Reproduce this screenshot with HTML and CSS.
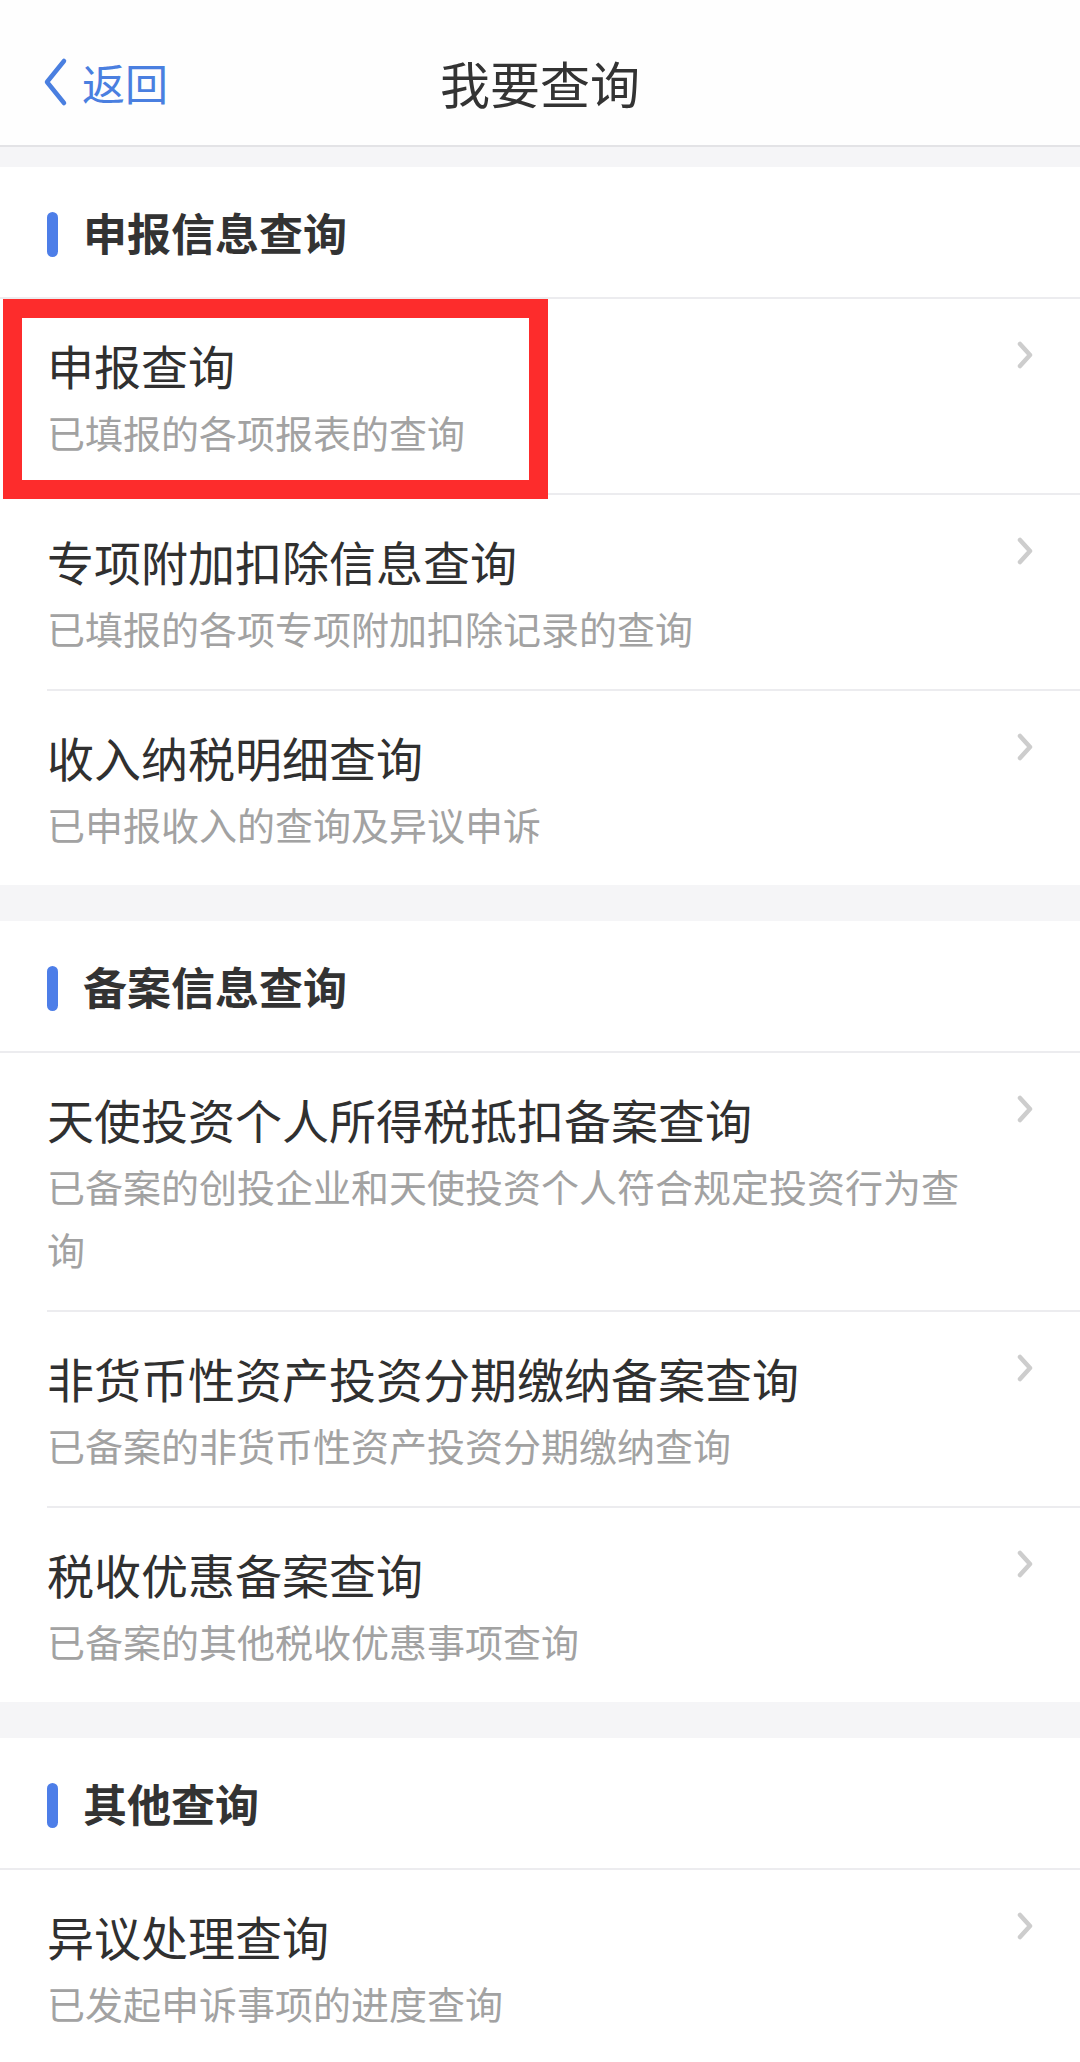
FILE: index.html
```html
<!DOCTYPE html>
<html lang="zh-CN">
<head>
<meta charset="utf-8">
<title>我要查询</title>
<link rel="stylesheet" href="styles.css">
</head>
<body>
<header class="nav">
  <div class="nav-back">
    <svg class="back-icon" width="26" height="50" viewBox="0 0 26 50"><polyline points="22,4 5,25 22,46" fill="none" stroke="#4a7fe0" stroke-width="4.5" stroke-linecap="round" stroke-linejoin="round"/></svg>
    <span class="back-text">返回</span>
  </div>
  <div class="nav-title">我要查询</div>
  <div></div>
</header>

<section class="section first">
  <div class="sec-head"><span class="bar"></span><span class="sec-title">申报信息查询</span></div>
  <div class="item marked">
    <div class="text"><div class="title">申报查询</div><div class="sub">已填报的各项报表的查询</div></div>
    <svg class="chev" width="16" height="28" viewBox="0 0 16 28"><polyline points="3,3 13,14 3,25" fill="none" stroke="#cdcdcd" stroke-width="4.5" stroke-linecap="round" stroke-linejoin="round"/></svg>
    <div class="highlight"></div>
  </div>
  <div class="item">
    <div class="text"><div class="title">专项附加扣除信息查询</div><div class="sub">已填报的各项专项附加扣除记录的查询</div></div>
    <svg class="chev" width="16" height="28" viewBox="0 0 16 28"><polyline points="3,3 13,14 3,25" fill="none" stroke="#cdcdcd" stroke-width="4.5" stroke-linecap="round" stroke-linejoin="round"/></svg>
  </div>
  <div class="item">
    <div class="text"><div class="title">收入纳税明细查询</div><div class="sub">已申报收入的查询及异议申诉</div></div>
    <svg class="chev" width="16" height="28" viewBox="0 0 16 28"><polyline points="3,3 13,14 3,25" fill="none" stroke="#cdcdcd" stroke-width="4.5" stroke-linecap="round" stroke-linejoin="round"/></svg>
  </div>
</section>

<section class="section">
  <div class="sec-head"><span class="bar"></span><span class="sec-title">备案信息查询</span></div>
  <div class="item">
    <div class="text"><div class="title">天使投资个人所得税抵扣备案查询</div><div class="sub">已备案的创投企业和天使投资个人符合规定投资行为查询</div></div>
    <svg class="chev" width="16" height="28" viewBox="0 0 16 28"><polyline points="3,3 13,14 3,25" fill="none" stroke="#cdcdcd" stroke-width="4.5" stroke-linecap="round" stroke-linejoin="round"/></svg>
  </div>
  <div class="item">
    <div class="text"><div class="title">非货币性资产投资分期缴纳备案查询</div><div class="sub">已备案的非货币性资产投资分期缴纳查询</div></div>
    <svg class="chev" width="16" height="28" viewBox="0 0 16 28"><polyline points="3,3 13,14 3,25" fill="none" stroke="#cdcdcd" stroke-width="4.5" stroke-linecap="round" stroke-linejoin="round"/></svg>
  </div>
  <div class="item">
    <div class="text"><div class="title">税收优惠备案查询</div><div class="sub">已备案的其他税收优惠事项查询</div></div>
    <svg class="chev" width="16" height="28" viewBox="0 0 16 28"><polyline points="3,3 13,14 3,25" fill="none" stroke="#cdcdcd" stroke-width="4.5" stroke-linecap="round" stroke-linejoin="round"/></svg>
  </div>
</section>

<section class="section">
  <div class="sec-head"><span class="bar"></span><span class="sec-title">其他查询</span></div>
  <div class="item">
    <div class="text"><div class="title">异议处理查询</div><div class="sub">已发起申诉事项的进度查询</div></div>
    <svg class="chev" width="16" height="28" viewBox="0 0 16 28"><polyline points="3,3 13,14 3,25" fill="none" stroke="#cdcdcd" stroke-width="4.5" stroke-linecap="round" stroke-linejoin="round"/></svg>
  </div>
</section>
</body>
</html>
```

FILE: styles.css
```css
html, body {
  margin: 0;
  padding: 0;
}
body {
  width: 1080px;
  min-height: 2062px;
  background: #f5f5f7;
  font-family: "Noto Sans CJK SC", "Noto Sans", sans-serif;
  color: #333;
}
.nav {
  height: 127px;
  padding-top: 18px;
  background: #fefefe;
  border-bottom: 2px solid #e3e3e6;
  display: grid;
  grid-template-columns: 1fr auto 1fr;
  align-items: center;
}
.nav-back {
  display: flex;
  align-items: center;
  padding-left: 42px;
}
.back-icon {
  display: block;
  margin-top: 1px;
}
.back-text {
  font-size: 43px;
  line-height: 60px;
  color: #4a7fe0;
  margin-left: 14px;
}
.nav-title {
  font-size: 50px;
  line-height: 64px;
  color: #333;
}
.section {
  background: #fff;
  margin-top: 36px;
}
.section.first {
  margin-top: 20px;
}
.sec-head {
  height: 130px;
  border-bottom: 2px solid #ececef;
  display: flex;
  align-items: center;
  padding-left: 47px;
}
.bar {
  width: 11px;
  height: 45px;
  border-radius: 6px;
  background: #4d7ee8;
  margin-right: 25px;
  margin-top: 4px;
}
.sec-title {
  font-size: 44px;
  font-weight: 700;
  line-height: 60px;
  color: #333;
}
.item {
  position: relative;
  margin-left: 47px;
  padding: 33px 0 30px 0;
  display: flex;
  align-items: flex-start;
}
.item + .item {
  border-top: 2px solid #ececef;
}
.text {
  flex: 1;
  min-width: 0;
}
.title {
  font-size: 47px;
  line-height: 66px;
  color: #303030;
}
.sub {
  font-size: 38px;
  line-height: 63px;
  margin-top: 2px;
  color: #a2a2a2;
}
.chev {
  display: block;
  flex: none;
  margin-top: 9px;
  margin-left: 40px;
  margin-right: 47px;
}
.highlight {
  position: absolute;
  z-index: 2;
  left: -44px;
  top: 0;
  width: 545px;
  height: 200px;
  box-sizing: border-box;
  border: 19px solid #fd2c2c;
  pointer-events: none;
}
```
